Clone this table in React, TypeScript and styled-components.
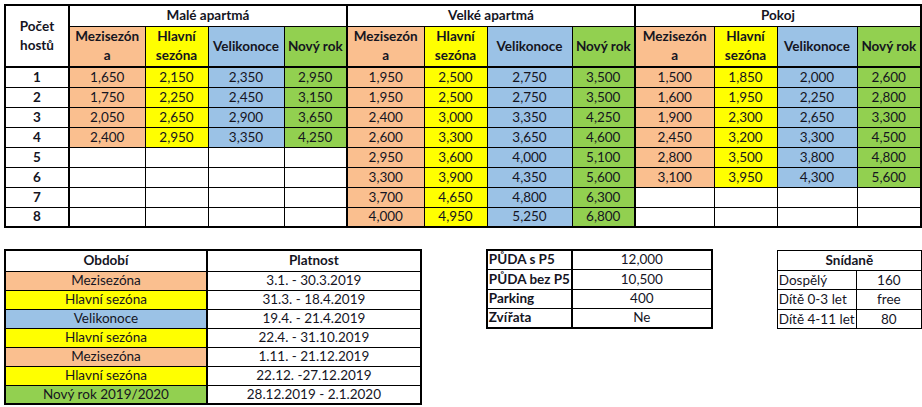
import React from 'react'
import styled, { createGlobalStyle } from 'styled-components'

const GlobalStyle = createGlobalStyle`
html, body {
  margin: 0;
  padding: 0;
  background: #fff;
}
body {
  font-family: Lato, "Liberation Sans", Arial, sans-serif;
  font-size: 13.5px;
  color: #15151f;
}
`

const OFF = '#FABF8F'
const MAIN = '#FFFF00'
const EASTER = '#9BC2E6'
const NEWYEAR = '#92D050'

type Group = {
  name: string,
  widths: number[],
  rows: (number[] | null)[],
}

const groups: Group[] = [
  {
    name: 'Malé apartmá',
    widths: [76, 63, 76, 63],
    rows: [
      [1650, 2150, 2350, 2950],
      [1750, 2250, 2450, 3150],
      [2050, 2650, 2900, 3650],
      [2400, 2950, 3350, 4250],
      null, null, null, null,
    ],
  },
  {
    name: 'Velké apartmá',
    widths: [77, 63, 85, 63],
    rows: [
      [1950, 2500, 2750, 3500],
      [1950, 2500, 2750, 3500],
      [2400, 3000, 3350, 4250],
      [2600, 3300, 3650, 4600],
      [2950, 3600, 4000, 5100],
      [3300, 3900, 4350, 5600],
      [3700, 4650, 4800, 6300],
      [4000, 4950, 5250, 6800],
    ],
  },
  {
    name: 'Pokoj',
    widths: [79, 63, 80, 64],
    rows: [
      [1500, 1850, 2000, 2600],
      [1600, 1950, 2250, 2800],
      [1900, 2300, 2650, 3300],
      [2450, 3200, 3300, 4500],
      [2800, 3500, 3800, 4800],
      [3100, 3950, 4300, 5600],
      null, null,
    ],
  },
]

const seasons = [
  { label: <>Mezisezón<br />a</>, bg: OFF },
  { label: <>Hlavní<br />sezóna</>, bg: MAIN },
  { label: 'Velikonoce', bg: EASTER },
  { label: 'Nový rok', bg: NEWYEAR },
]

const periods = [
  { name: 'Mezisezóna', bg: OFF, range: '3.1. - 30.3.2019' },
  { name: 'Hlavní sezóna', bg: MAIN, range: '31.3. - 18.4.2019' },
  { name: 'Velikonoce', bg: EASTER, range: '19.4. - 21.4.2019' },
  { name: 'Hlavní sezóna', bg: MAIN, range: '22.4. - 31.10.2019' },
  { name: 'Mezisezóna', bg: OFF, range: '1.11. - 21.12.2019' },
  { name: 'Hlavní sezóna', bg: MAIN, range: '22.12. -27.12.2019' },
  { name: 'Nový rok 2019/2020', bg: NEWYEAR, range: '28.12.2019 - 2.1.2020' },
]

const extras = [
  ['PŮDA s P5', '12,000'],
  ['PŮDA bez P5', '10,500'],
  ['Parking', '400'],
  ['Zvířata', 'Ne'],
]

const breakfast = [
  ['Dospělý', '160'],
  ['Dítě 0-3 let', 'free'],
  ['Dítě 4-11 let', '80'],
]

const Page = styled.div`
display: flex;
flex-direction: column;
gap: 21px;
padding: 4px 0 0 4px;
`

const BottomRow = styled.div`
display: flex;
align-items: flex-start;
gap: 64px;
`

const Sheet = styled.table<{ $outer?: number }>`
border-collapse: collapse;
table-layout: fixed;
border: ${p => p.$outer ?? 2}px solid #000;
`

const Col = styled.col<{ $w: number }>`
width: ${p => p.$w}px;
`

const Row = styled.tr<{ $h: number }>`
height: ${p => p.$h}px;
`

const Cell = styled.td<{
  $bg?: string,
  $bold?: boolean,
  $left?: boolean,
  $sepL?: boolean,
  $sepB?: boolean,
  $wrap?: boolean,
}>`
border: 1px solid #000;
${p => p.$sepL && 'border-left-width: 2px;'}
${p => p.$sepB && 'border-bottom-width: 2px;'}
background: ${p => p.$bg || '#fff'};
font-weight: ${p => p.$bold ? 700 : 400};
text-align: ${p => p.$left ? 'left' : 'center'};
padding: 0 ${p => p.$left ? 1 : 2}px;
line-height: ${p => p.$wrap ? 19 : 15}px;
white-space: nowrap;
overflow: hidden;
vertical-align: middle;
`

const fmt = (n: number) => n.toLocaleString('en-US')

const PriceTable: React.FC = () => (
  <Sheet>
    <colgroup>
      <Col $w={64} />
      {groups.map(g => g.widths.map((w, i) => <Col key={g.name + i} $w={w} />))}
    </colgroup>
    <tbody>
      <Row $h={21}>
        <Cell rowSpan={2} $bold $sepB $wrap>Počet<br />hostů</Cell>
        {groups.map(g => (
          <Cell key={g.name} colSpan={4} $bold $sepL>{g.name}</Cell>
        ))}
      </Row>
      <Row $h={41}>
        {groups.map(g => seasons.map((s, i) => (
          <Cell key={g.name + i} $bg={s.bg} $bold $sepL={i === 0} $sepB $wrap>{s.label}</Cell>
        )))}
      </Row>
      {[0, 1, 2, 3, 4, 5, 6, 7].map(r => (
        <Row key={r} $h={20}>
          <Cell $bold>{r + 1}</Cell>
          {groups.map(g => {
            const values = g.rows[r]
            return seasons.map((s, i) => (
              <Cell key={g.name + i} $bg={values ? s.bg : undefined} $sepL={i === 0}>
                {values ? fmt(values[i]) : ''}
              </Cell>
            ))
          })}
        </Row>
      ))}
    </tbody>
  </Sheet>
)

const PeriodTable: React.FC = () => (
  <Sheet>
    <colgroup>
      <Col $w={203} />
      <Col $w={215} />
    </colgroup>
    <tbody>
      <Row $h={21}>
        <Cell $bold>Období</Cell>
        <Cell $bold $sepL>Platnost</Cell>
      </Row>
      {periods.map((p, i) => (
        <Row key={i} $h={19}>
          <Cell $bg={p.bg}>{p.name}</Cell>
          <Cell $sepL>{p.range}</Cell>
        </Row>
      ))}
    </tbody>
  </Sheet>
)

const ExtrasTable: React.FC = () => (
  <Sheet>
    <colgroup>
      <Col $w={85} />
      <Col $w={141} />
    </colgroup>
    <tbody>
      {extras.map(([label, value], i) => (
        <Row key={label} $h={i % 2 ? 20 : 19}>
          <Cell $bold $left>{label}</Cell>
          <Cell $sepL>{value}</Cell>
        </Row>
      ))}
    </tbody>
  </Sheet>
)

const BreakfastWrap = styled.div`
margin-top: 1px;
`

const BreakfastTable: React.FC = () => (
  <BreakfastWrap>
    <Sheet $outer={1}>
      <colgroup>
        <Col $w={79} />
        <Col $w={66} />
      </colgroup>
      <tbody>
        <Row $h={20}>
          <Cell colSpan={2} $bold>Snídaně</Cell>
        </Row>
        {breakfast.map(([label, value], i) => (
          <Row key={label} $h={i % 2 ? 20 : 19}>
            <Cell $left>{label}</Cell>
            <Cell>{value}</Cell>
          </Row>
        ))}
      </tbody>
    </Sheet>
  </BreakfastWrap>
)

export default function App() {
  return <>
    <GlobalStyle />
    <Page>
      <PriceTable />
      <BottomRow>
        <PeriodTable />
        <ExtrasTable />
        <BreakfastTable />
      </BottomRow>
    </Page>
  </>
}
